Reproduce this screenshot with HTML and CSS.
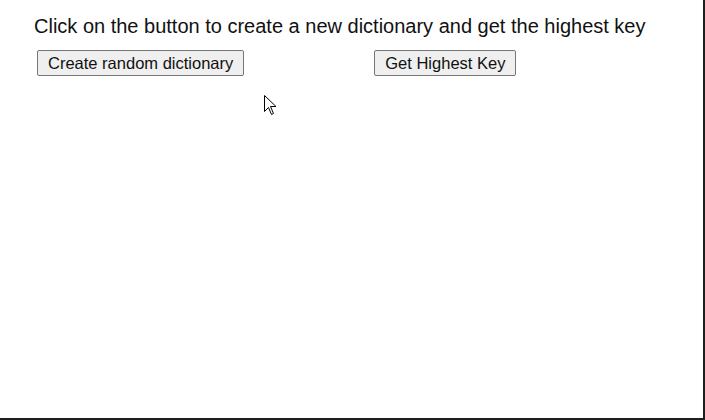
FILE: index.html
```html
<!DOCTYPE html>
<html>
<head>
<meta charset="utf-8">
<link rel="stylesheet" href="styles.css">
</head>
<body>
<div class="frame">
  <p class="intro">Click on the button to create a new dictionary and get the highest key</p>
  <div class="actions">
    <button class="btn btn-create">Create random dictionary</button>
    <button class="btn">Get Highest Key</button>
  </div>
  <svg class="cursor" width="14" height="21" viewBox="0 0 14 21">
    <path d="M0.5 0.5 L0.5 16.5 L4.5 12.5 L7.5 19.5 L9.5 18.5 L6.5 11.5 L12 11.5 Z" fill="#fff" stroke="#000" stroke-width="1" stroke-linejoin="miter"/>
  </svg>
</div>
</body>
</html>
```
FILE: styles.css
```css
html, body {
  margin: 0;
  padding: 0;
  background: #fff;
}
.frame {
  position: relative;
  box-sizing: border-box;
  width: 705px;
  height: 420px;
  border-right: 2px solid #1e1e1e;
  border-bottom: 2px solid #1e1e1e;
  padding: 15px 0 0 34px;
  font-family: "Liberation Sans", Arial, sans-serif;
  color: #000;
}
.intro {
  margin: 0;
  font-size: 20px;
  line-height: 23px;
  color: #111;
}
.actions {
  display: flex;
  gap: 130px;
  margin: 12px 0 0 3px;
}
.btn {
  font-family: "Liberation Sans", Arial, sans-serif;
  font-size: 16.5px;
  line-height: 18px;
  padding: 3px 10px;
  background: #efefef;
  border: 1px solid #767676;
  border-radius: 2px;
  color: #111;
  height: 26px;
  box-sizing: border-box;
}
.cursor {
  position: absolute;
  left: 264px;
  top: 95px;
}
```
